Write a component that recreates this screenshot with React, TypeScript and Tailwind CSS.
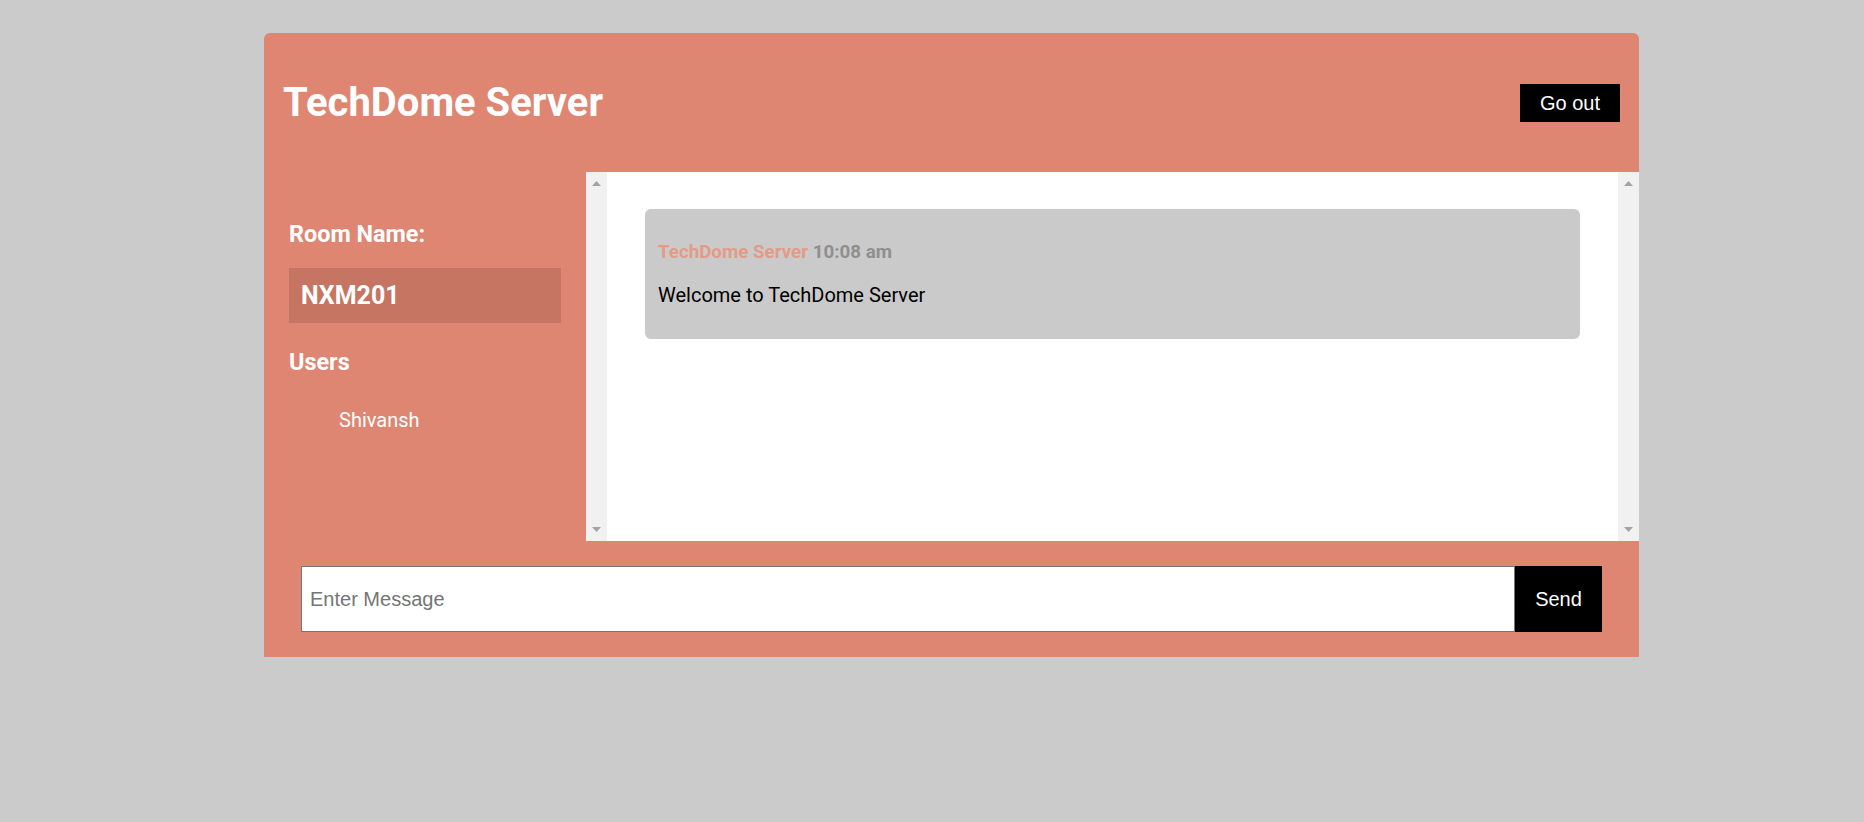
import React from 'react';

const ScrollTrack: React.FC = () => (
  <div className="w-[21px] shrink-0 bg-[#f1f1f1] flex flex-col items-center justify-between py-[9px]">
    <svg width="9" height="5" viewBox="0 0 9 5">
      <polygon points="4.5,0 9,5 0,5" fill="#a3a3a3" />
    </svg>
    <svg width="9" height="5" viewBox="0 0 9 5">
      <polygon points="0,0 9,0 4.5,5" fill="#a3a3a3" />
    </svg>
  </div>
);

export default function App() {
  const [message, setMessage] = React.useState('');

  return (
    <div className="min-h-screen bg-[#cbcbcb] pt-[33px] font-['Roboto',sans-serif]">
      <div className="ml-[264px] w-[1375px] bg-[#de8672] rounded-t-[6px]">
        <header className="h-[139px] flex items-center justify-between pl-[19px] pr-[19px]">
          <h1 className="text-[40px] leading-[46px] font-bold text-white">TechDome Server</h1>
          <button className="w-[100px] h-[38px] bg-black text-white text-[20px] font-['Liberation_Sans',Arial,sans-serif]">
            Go out
          </button>
        </header>

        <main className="grid grid-cols-[322px_1fr] h-[369px]">
          <aside className="px-[25px] pt-[49px] text-white">
            <h3 className="text-[23.4px] leading-[27px] font-bold">Room Name:</h3>
            <div className="mt-[20px] h-[55px] flex items-center px-[12px] bg-[#c57562]">
              <h2 className="text-[25px] leading-[29px] font-bold">NXM201</h2>
            </div>
            <h3 className="mt-[26px] text-[23.4px] leading-[27px] font-bold">Users</h3>
            <ul className="mt-[33px] pl-[50px]">
              <li className="text-[20px] leading-[23px]">Shivansh</li>
            </ul>
          </aside>

          <div className="flex bg-white">
            <ScrollTrack />
            <div className="flex-1 px-[38px] pt-[37px]">
              <div className="bg-[#cacaca] rounded-[6px] pl-[13px] pr-[13px] pt-[32px] pb-[32px]">
                <p className="text-[18.75px] leading-[22px] font-bold">
                  <span className="text-[#e59a86]">TechDome Server</span>{' '}
                  <span className="text-[#8f8f8f]">10:08 am</span>
                </p>
                <p className="mt-[21px] text-[20px] leading-[23px] text-black">Welcome to TechDome Server</p>
              </div>
            </div>
            <ScrollTrack />
          </div>
        </main>

        <form
          className="flex px-[37px] py-[25px]"
          onSubmit={(e) => {
            e.preventDefault();
            setMessage('');
          }}
        >
          <input
            type="text"
            placeholder="Enter Message"
            value={message}
            onChange={(e) => setMessage(e.target.value)}
            className="flex-1 h-[66px] bg-white border border-[#767676] pl-[8px] text-[20px] font-['Liberation_Sans',Arial,sans-serif] placeholder:text-[#757575] focus:outline-none"
          />
          <button
            type="submit"
            className="w-[87px] h-[66px] bg-black text-white text-[20px] font-['Liberation_Sans',Arial,sans-serif]"
          >
            Send
          </button>
        </form>
      </div>
    </div>
  );
}
